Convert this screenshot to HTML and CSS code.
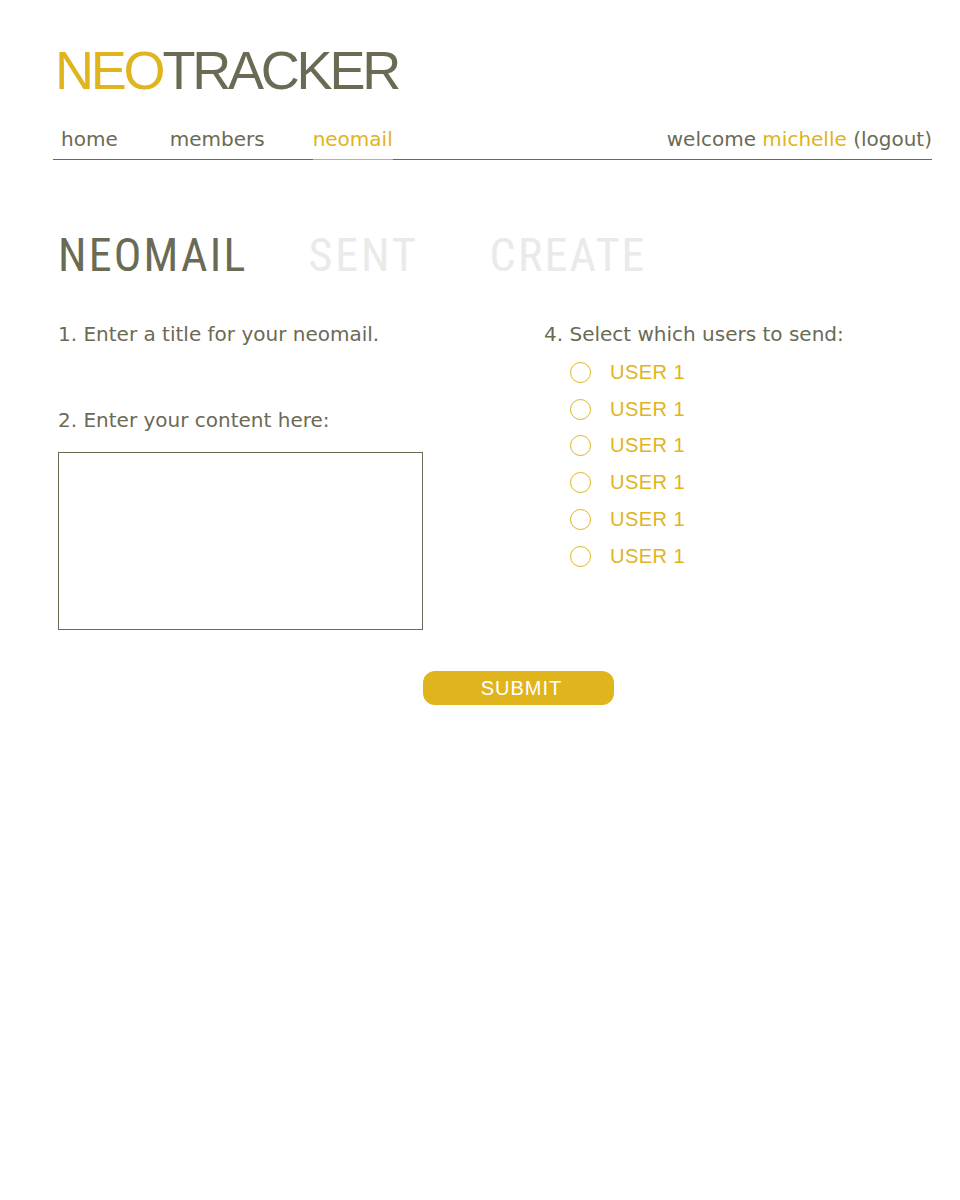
FILE: index.html
```html
<!DOCTYPE html>
<html>
<head>
<meta charset="utf-8">
<link rel="stylesheet" href="styles.css">
</head>
<body>
<div class="page">
  <header class="logo"><span class="gold">NEO</span>TRACKER</header>
  <nav class="nav">
    <div class="links">
      <a class="link home">home</a>
      <a class="link members">members</a>
      <a class="link active">neomail</a>
    </div>
    <div class="welcome">welcome <span class="gold">michelle</span> (logout)</div>
  </nav>
  <div class="tabs">
    <span class="tab current">NEOMAIL</span>
    <span class="tab sent">SENT</span>
    <span class="tab">CREATE</span>
  </div>
  <div class="form">
    <div class="col left">
      <div class="label">1. Enter a title for your neomail.</div>
      <div class="label second">2. Enter your content here:</div>
      <div class="box"></div>
    </div>
    <div class="col right">
      <div class="label">4. Select which users to send:</div>
      <ul class="users">
        <li><span class="radio"></span>USER 1</li>
        <li><span class="radio"></span>USER 1</li>
        <li><span class="radio"></span>USER 1</li>
        <li><span class="radio"></span>USER 1</li>
        <li><span class="radio"></span>USER 1</li>
        <li><span class="radio"></span>USER 1</li>
      </ul>
    </div>
  </div>
  <div class="actions"><button class="submit">SUBMIT</button></div>
</div>
</body>
</html>
```
FILE: styles.css
```css
* { box-sizing: border-box; }
body {
  margin: 0;
  background: #fff;
  font-family: "DejaVu Sans", "Liberation Sans", sans-serif;
  color: #6b6a55;
}
.gold { color: #e0b41c; }
.page { padding: 38px 28px 0 53px; }
.logo {
  font-family: "Liberation Sans", Arial, sans-serif;
  font-size: 54px;
  line-height: 64px;
  letter-spacing: -3.2px;
  padding-left: 2px;
}
.nav {
  margin-top: 25px;
  display: flex;
  justify-content: space-between;
  align-items: flex-end;
  border-bottom: 1px solid #6b6a55;
  font-size: 20px;
}
.links { display: flex; }
.link {
  display: block;
  padding: 0 0 8px 0;
  line-height: 24px;
  margin-bottom: -1px;
  border-bottom: 1px solid transparent;
}
.home { padding-left: 8px; margin-right: 52px; }
.members { margin-right: 48px; }
.active { color: #e0b41c; border-bottom-color: #e0b41c; }
.welcome { line-height: 24px; padding-bottom: 8px; }
.tabs {
  margin-top: 70px;
  padding-left: 5px;
  display: flex;
  font-family: "Roboto Condensed", "Liberation Sans", sans-serif;
  font-size: 46px;
  line-height: 50px;
  letter-spacing: 2.2px;
}
.tab { color: #eaeaea; }
.current { color: #6b6a55; margin-right: 61px; }
.sent { margin-right: 71px; letter-spacing: 2.9px; }
.form {
  display: flex;
  margin-top: 42px;
  padding-left: 5px;
}
.label { font-size: 20px; line-height: 24px; }
.left { width: 486px; }
.second { margin-top: 62px; }
.box {
  margin-top: 20px;
  width: 365px;
  height: 178px;
  border: 1px solid #6b6a55;
}
.users {
  list-style: none;
  margin: 8px 0 0 0;
  padding: 0 0 0 26px;
}
.users li {
  display: flex;
  align-items: center;
  height: 36.8px;
  font-family: "Liberation Sans", Arial, sans-serif;
  font-size: 20px;
  letter-spacing: 0.5px;
  color: #e0b41c;
}
.radio {
  width: 21px;
  height: 21px;
  border: 1px solid #e0b41c;
  border-radius: 50%;
  margin-right: 19px;
}
.actions {
  display: flex;
  padding-left: 370px;
  margin-top: 41px;
}
.submit {
  width: 191px;
  height: 34px;
  border: 0;
  border-radius: 12px;
  background: #e0b41c;
  color: #fff;
  font-family: "Liberation Sans", Arial, sans-serif;
  font-size: 20px;
  letter-spacing: 1px;
  padding: 0 0 0 6px;
}
```
